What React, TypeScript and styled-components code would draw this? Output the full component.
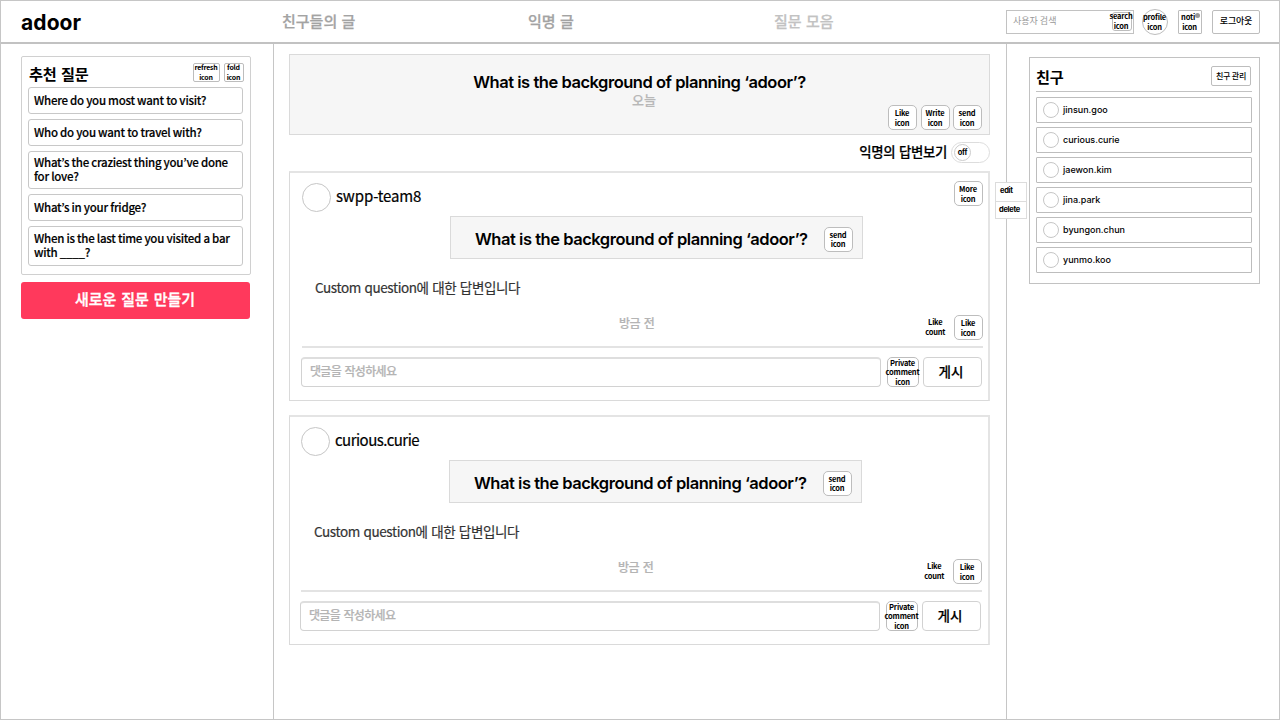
import React from "react";
import styled, { createGlobalStyle } from "styled-components";

const korean = '"Noto Sans CJK KR", "Noto Sans", sans-serif';
const grotesque = 'Inter, "Noto Sans CJK KR", sans-serif';

const GlobalStyle = createGlobalStyle`
  * { box-sizing: border-box; }
  body { margin: 0; background: #fff; color: #000; font-family: ${korean}; }
  button { padding: 0; font: inherit; color: inherit; background: #fff; }
  h1, h2, h3, p, ul { margin: 0; padding: 0; }
  ul { list-style: none; }
`;

const Page = styled.div`
  width: 1280px;
  height: 720px;
  display: flex;
  flex-direction: column;
  border: 1px solid #c6c6c6;
  overflow: hidden;
`;

const Header = styled.header`
  height: 43px;
  flex: none;
  display: flex;
  align-items: center;
  border-bottom: 2px solid #c2c2c2;
  padding: 0 19px 0 20px;
`;

const Logo = styled.h1`
  flex: none;
  width: 261px;
  font: 700 21px/26px ${grotesque};
  letter-spacing: 0.1px;
  padding-top: 2px;
`;

const Nav = styled.nav`
  flex: none;
  display: flex;
  width: 724px;
  padding-bottom: 1px;
`;

const NavItem = styled.a<{ $tone: string }>`
  flex: none;
  width: 246px;
  font-size: 15px;
  line-height: 22px;
  font-weight: 500;
  word-spacing: 1px;
  -webkit-text-stroke: 0.25px ${(p) => p.$tone};
  color: ${(p) => p.$tone};
  white-space: nowrap;
`;

const SearchBox = styled.div`
  flex: none;
  width: 128px;
  height: 24px;
  display: flex;
  align-items: center;
  justify-content: space-between;
  border: 1px solid #c2c2c2;
  padding: 0 1px 2px 6px;
  font-size: 9px;
  line-height: 12px;
  color: #999;
  white-space: nowrap;
`;

const IconButton = styled.button<{ $w?: number; $h?: number; $radius?: number; $size?: number; $gap?: number }>`
  position: relative;
  flex: none;
  width: ${(p) => p.$w ?? 29}px;
  height: ${(p) => p.$h ?? 25}px;
  margin-left: ${(p) => p.$gap ?? 0}px;
  border: 1px solid #bdbdbd;
  border-radius: ${(p) => p.$radius ?? 5}px;
  display: flex;
  align-items: center;
  justify-content: center;
  text-align: center;
  white-space: pre;
  color: #000;
  font-weight: 700;
  font-size: ${(p) => p.$size ?? 7.5}px;
  line-height: 9.5px;
  letter-spacing: -0.2px;
  padding-right: 1px;
`;

const SearchIcon = styled(IconButton)`
  margin-top: 1px;
  padding: 0 2px 1px 0;
`;

const Dot = styled.i`
  position: absolute;
  top: 2px;
  right: 1px;
  width: 5px;
  height: 5px;
  border-radius: 50%;
  background: #999;
`;

const Columns = styled.div`
  flex: 1;
  display: flex;
`;

const LeftColumn = styled.aside`
  width: 273px;
  padding: 12px 22px 0 20px;
  border-right: 1px solid #c6c6c6;
`;

const RecommendCard = styled.section`
  width: 230px;
  height: 219px;
  border: 1px solid #d0d0d0;
  border-radius: 2px;
  padding: 6px 6px 0 6px;
`;

const RecommendHead = styled.div`
  height: 24px;
  display: flex;
  align-items: flex-start;
  padding-left: 1px;
`;

const SideTitle = styled.h2`
  flex: 1;
  font-size: 15.2px;
  line-height: 21px;
  font-weight: 700;
  letter-spacing: -0.3px;
  word-spacing: 1.5px;
`;

const Question = styled.li<{ $h: number }>`
  width: 215px;
  height: ${(p) => p.$h}px;
  margin-bottom: 5px;
  display: flex;
  align-items: center;
  border: 1px solid #c8c8c8;
  border-radius: 3px;
  padding: 0 0 2px 5px;
  font-size: 11.5px;
  line-height: 14px;
  font-weight: 500;
  letter-spacing: -0.26px;
  -webkit-text-stroke: 0.15px #000;
  white-space: pre;
`;

const NewQuestion = styled.button`
  width: 229px;
  height: 37px;
  margin-top: 7px;
  padding: 0 1px 3px 0;
  border: 0;
  border-radius: 3px;
  background: #ff395c;
  color: #fff;
  font-size: 15px;
  line-height: 22px;
  font-weight: 500;
  word-spacing: 1.5px;
  -webkit-text-stroke: 0.35px #fff;
`;

const Feed = styled.main`
  width: 732px;
  padding: 10px 15px 0 15px;
`;

const Prompt = styled.section`
  width: 701px;
  height: 81px;
  padding: 16px 7px 0 0;
  border: 1px solid #dadada;
  background: #f6f6f6;
  display: flex;
  flex-direction: column;
`;

const PromptText = styled.h2`
  font: 600 16.5px/22px ${grotesque};
  letter-spacing: -0.47px;
  white-space: nowrap;
`;

const PromptDate = styled.p`
  margin-top: -1px;
  padding-left: 9px;
  font-size: 13px;
  line-height: 16px;
  color: #b8b8b8;
  font-weight: 500;
  -webkit-text-stroke: 0.2px #b8b8b8;
`;

const PromptCopy = styled.div`
  display: flex;
  flex-direction: column;
  align-items: center;
  padding-left: 7px;
`;

const PromptActions = styled.div`
  display: flex;
  justify-content: flex-end;
  margin-top: -3px;
`;

const FilterRow = styled.div`
  height: 36px;
  display: flex;
  align-items: flex-start;
  justify-content: flex-end;
  padding: 7px 1px 0 0;
`;

const FilterLabel = styled.span`
  font-size: 13.4px;
  line-height: 18px;
  font-weight: 500;
  letter-spacing: -0.3px;
  word-spacing: 1px;
  -webkit-text-stroke: 0.2px #000;
`;

const Toggle = styled.button`
  width: 39px;
  height: 21px;
  margin-left: 4px;
  padding-left: 2px;
  border: 1px solid #ddd;
  border-radius: 11px;
  display: flex;
  align-items: center;
`;

const Knob = styled.span`
  width: 17px;
  height: 17px;
  border: 1px solid #ccc;
  border-radius: 50%;
  font: 700 7.5px/16px ${grotesque};
  letter-spacing: -0.2px;
`;

const Post = styled.article`
  position: relative;
  width: 701px;
  height: 230px;
  margin-bottom: 14px;
  border: 1px solid #dadada;
  border-top: 2px solid #e4e4e4;
  border-right: 2px solid #e4e4e4;
`;

const PostBody = styled.div<{ $shift: number }>`
  width: 681px;
  margin-left: ${(p) => 12 - p.$shift}px;
  padding-top: 8px;
`;

const PostHead = styled.div`
  height: 35px;
  display: flex;
  align-items: flex-start;
`;

const Avatar = styled.span<{ $size: number; $drop?: number }>`
  flex: none;
  width: ${(p) => p.$size}px;
  height: ${(p) => p.$size}px;
  margin-top: ${(p) => p.$drop ?? 0}px;
  border: 1px solid #c6c6c6;
  border-radius: 50%;
`;

const Author = styled.h3<{ $tracking: number }>`
  flex: 1;
  padding: 4px 0 0 5px;
  font-size: 15px;
  line-height: 22px;
  font-weight: 400;
  letter-spacing: ${(p) => p.$tracking}px;
  -webkit-text-stroke: 0.2px #000;
`;

const Quote = styled.div`
  width: 413px;
  height: 43px;
  margin-left: 148px;
  padding: 3px 9px 0 24px;
  display: flex;
  align-items: center;
  justify-content: space-between;
  border: 1px solid #dadada;
  background: #f6f6f6;
`;

const Answer = styled.p`
  padding: 18px 0 0 13px;
  font-size: 13.5px;
  line-height: 20px;
  letter-spacing: -0.4px;
  word-spacing: 1px;
  color: #333;
  -webkit-text-stroke: 0.2px #333;
`;

const PostMeta = styled.div`
  height: 25px;
  margin-top: 18px;
  display: flex;
`;

const When = styled.time`
  padding-left: 317px;
  flex: 1;
  font-size: 12px;
  line-height: 16px;
  letter-spacing: -0.5px;
  word-spacing: 1.5px;
  font-weight: 500;
  color: #b4b4b4;
  -webkit-text-stroke: 0.2px #b4b4b4;
`;

const Count = styled.span`
  padding-top: 2px;
  text-align: center;
  white-space: pre;
  font-size: 7.5px;
  line-height: 9.5px;
  letter-spacing: -0.3px;
  font-weight: 700;
`;

const Divider = styled.hr<{ $w: number; $thick: number; $tone: string; $gap?: number }>`
  width: ${(p) => p.$w}px;
  height: ${(p) => p.$thick}px;
  margin: ${(p) => p.$gap ?? 0}px 0 0;
  border: 0;
  background: ${(p) => p.$tone};
`;

const CommentRow = styled.div`
  display: flex;
  margin: 9px 0 0 -1px;
`;

const CommentBox = styled.div`
  width: 580px;
  height: 30px;
  padding: 3px 8px;
  border: 1px solid #d2d2d2;
  border-top: 2px solid #dedede;
  border-radius: 4px;
  font-size: 12px;
  line-height: 17px;
  letter-spacing: -0.7px;
  word-spacing: 1.5px;
  font-weight: 500;
  color: #b4b4b4;
  -webkit-text-stroke: 0.2px #b4b4b4;
`;

const Submit = styled.button`
  width: 59px;
  height: 30px;
  margin-left: 4px;
  padding: 0 3px 2px 0;
  border: 1px solid #d2d2d2;
  border-radius: 4px;
  font-size: 13.5px;
  line-height: 20px;
  font-weight: 500;
  -webkit-text-stroke: 0.2px #000;
`;

const Menu = styled.ul`
  position: absolute;
  left: 705px;
  top: 9px;
  width: 32px;
  border: 1px solid #dcdcdc;
  background: #fff;
  font: 700 7.5px/16px ${grotesque};
  letter-spacing: -0.3px;
  li { height: 18px; padding-left: 4px; }
  li + li { height: 17px; border-top: 1px solid #dcdcdc; padding-left: 3px; }
`;

const RightColumn = styled.aside`
  flex: 1;
  border-left: 1px solid #c6c6c6;
  padding: 13px 0 0 22px;
`;

const FriendCard = styled.section`
  width: 231px;
  height: 227px;
  border: 1px solid #c2c2c2;
  padding: 8px 6px 0 6px;
`;

const FriendHead = styled.div`
  display: flex;
  height: 25px;
  padding-right: 2px;
`;

const TextButton = styled.button<{ $w: number; $h: number; $size: number; $gap?: number }>`
  flex: none;
  width: ${(p) => p.$w}px;
  height: ${(p) => p.$h}px;
  margin-left: ${(p) => p.$gap ?? 0}px;
  padding-bottom: 1px;
  border: 1px solid #bdbdbd;
  border-radius: 2px;
  font-size: ${(p) => p.$size}px;
  line-height: 12px;
  font-weight: 500;
  letter-spacing: -0.2px;
  white-space: nowrap;
`;

const Friend = styled.li`
  height: 26px;
  width: 216px;
  margin-bottom: 4px;
  padding-left: 6px;
  display: flex;
  align-items: center;
  gap: 4px;
  border: 1px solid #bdbdbd;
  border-radius: 1px;
  font: 500 9px/12px ${grotesque};
`;

const FriendList = styled.ul`
  padding-top: 5px;
`;

const questions: [string, number][] = [
  ["Where do you most want to visit?", 27],
  ["Who do you want to travel with?", 27],
  ["What’s the craziest thing you’ve done\nfor love?", 38],
  ["What’s in your fridge?", 27],
  ["When is the last time you visited a bar\nwith ____?", 40],
];
const friends = ["jinsun.goo", "curious.curie", "jaewon.kim", "jina.park", "byungon.chun", "yunmo.koo"];
const prompt = "What is the background of planning ‘adoor’?";

type PostProps = { author: string; tracking: number; shift?: number; own?: boolean };

function PostCard({ author, tracking, shift = 0, own = false }: PostProps) {
  return (
    <Post>
      <PostBody $shift={shift}>
        <PostHead>
          <Avatar $size={29} $drop={2} />
          <Author $tracking={tracking}>{author}</Author>
          {own && <IconButton>{"More\nicon"}</IconButton>}
        </PostHead>
        <Quote>
          <PromptText>{prompt}</PromptText>
          <IconButton>{"send\nicon"}</IconButton>
        </Quote>
        <Answer>Custom question에 대한 답변입니다</Answer>
        <PostMeta>
          <When>방금 전</When>
          <Count>{"Like\ncount"}</Count>
          <IconButton $gap={9}>{"Like\nicon"}</IconButton>
        </PostMeta>
        <Divider $w={681} $thick={2} $tone="#e3e3e3" $gap={6} />
        <CommentRow>
          <CommentBox>댓글을 작성하세요</CommentBox>
          <IconButton $w={32} $h={30} $gap={6}>{"Private\ncomment\nicon"}</IconButton>
          <Submit>게시</Submit>
        </CommentRow>
      </PostBody>
      {own && <Menu><li>edit</li><li>delete</li></Menu>}
    </Post>
  );
}

export default function App() {
  return (
    <>
      <GlobalStyle />
      <Page>
        <Header>
          <Logo>adoor</Logo>
          <Nav>
            <NavItem $tone="#a3a3a3">친구들의 글</NavItem>
            <NavItem $tone="#a3a3a3">익명 글</NavItem>
            <NavItem $tone="#c2c2c2">질문 모음</NavItem>
          </Nav>
          <SearchBox>
            사용자 검색
            <SearchIcon $w={20} $h={19} $radius={3}>{"search\nicon"}</SearchIcon>
          </SearchBox>
          <IconButton $w={26} $h={26} $radius={13} $gap={8}>{"profile\nicon"}</IconButton>
          <IconButton $w={24} $h={24} $radius={1} $gap={10}>{"noti  \nicon"}<Dot /></IconButton>
          <TextButton $w={48} $h={24} $size={9} $gap={10}>로그아웃</TextButton>
        </Header>
        <Columns>
          <LeftColumn>
            <RecommendCard>
              <RecommendHead>
                <SideTitle>추천 질문</SideTitle>
                <IconButton $w={27} $h={19} $radius={2} $size={7}>{"refresh\nicon"}</IconButton>
                <IconButton $w={20} $h={19} $radius={2} $gap={4} $size={7}>{"fold\nicon"}</IconButton>
              </RecommendHead>
              <ul>
                {questions.map(([text, h]) => <Question key={text} $h={h}>{text}</Question>)}
              </ul>
            </RecommendCard>
            <NewQuestion>새로운 질문 만들기</NewQuestion>
          </LeftColumn>
          <Feed>
            <Prompt>
              <PromptCopy>
                <PromptText>{prompt}</PromptText>
                <PromptDate>오늘</PromptDate>
              </PromptCopy>
              <PromptActions>
                <IconButton>{"Like\nicon"}</IconButton>
                <IconButton $gap={4}>{"Write\nicon"}</IconButton>
                <IconButton $gap={3}>{"send\nicon"}</IconButton>
              </PromptActions>
            </Prompt>
            <FilterRow>
              <FilterLabel>익명의 답변보기</FilterLabel>
              <Toggle><Knob>off</Knob></Toggle>
            </FilterRow>
            <PostCard author="swpp-team8" tracking={-0.15} own />
            <PostCard author="curious.curie" tracking={-0.53} shift={1} />
          </Feed>
          <RightColumn>
            <FriendCard>
              <FriendHead>
                <SideTitle>친구</SideTitle>
                <TextButton $w={40} $h={20} $size={8}>친구 관리</TextButton>
              </FriendHead>
              <Divider $w={216} $thick={1} $tone="#c2c2c2" />
              <FriendList>
                {friends.map((name) => <Friend key={name}><Avatar $size={16} />{name}</Friend>)}
              </FriendList>
            </FriendCard>
          </RightColumn>
        </Columns>
      </Page>
    </>
  );
}
